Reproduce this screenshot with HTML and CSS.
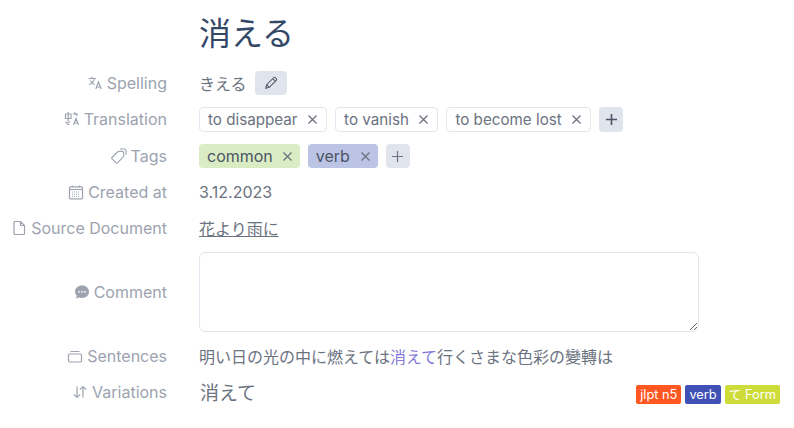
FILE: index.html
```html
<!DOCTYPE html>
<html lang="ja">
<head>
    <meta charset="UTF-8">
    <title>消える</title>
    <link rel="stylesheet" href="styles.css">
</head>
<body>
    <main class="word">
        <h1 class="word-title">消える</h1>
        <div class="fields">
            <div class="label">
                <svg class="icon" viewBox="0 0 16 16"><path d="M1.500 3.500h7.500M5 1.800v1.700M7.500 3.500c-.6 3-2.800 5.200-5.500 6.300M3.500 5.500c.8 2 2.200 3.300 4 4.200M8.800 14l2.700-7 2.700 7M9.600 12h3.800"/></svg>
                Spelling
            </div>
            <div class="value">
                <span>きえる</span>
                <button class="btn btn-edit"><svg class="icon icon-edit" viewBox="0 0 16 16"><path d="M2 14l1-4L11 2a1.500 1.500 0 0 1 2.100 0l.9.9a1.500 1.500 0 0 1 0 2.100L6 13zM10 3l3 3M3 10l3 3"/></svg></button>
            </div>

            <div class="label label-top">
                <svg class="icon" viewBox="0 0 16 16"><path d="M1.500 3h5.500v4.500H1.500zM4.200 1v9M2 10.500c.3 2 1.500 3 3.500 3.200M6 10.800c-.8 0-1.500 0-2.500.6M9 3h5M10.500 1.500l2.500 3M9.500 14l2.500-6.500 2.500 6.500M10.300 12h3.400"/></svg>
                Translation
            </div>
            <div class="value">
                <span class="tag">to disappear<svg class="close" viewBox="0 0 9 9"><path d="M.5.500l8 8M8.500.500l-8 8"/></svg></span>
                <span class="tag">to vanish<svg class="close" viewBox="0 0 9 9"><path d="M.5.500l8 8M8.500.500l-8 8"/></svg></span>
                <span class="tag">to become lost<svg class="close" viewBox="0 0 9 9"><path d="M.5.500l8 8M8.500.500l-8 8"/></svg></span>
                <button class="btn btn-add btn-tall"><svg class="plus plus-dark" viewBox="0 0 11 11"><path d="M5.500 0v11M0 5.500h11"/></svg></button>
            </div>

            <div class="label">
                <svg class="icon icon-tags" viewBox="0 0 16 16"><path d="M1 9.500L7 3.500a1 1 0 0 1 .8-.3l3.700.2a1 1 0 0 1 1 1l.2 3.700a1 1 0 0 1-.3.8l-6 6a1 1 0 0 1-1.400 0l-4-4a1 1 0 0 1 0-1.400zM9.800 5.200h.01M9 1h4.500a1.500 1.500 0 0 1 1.500 1.500V7"/></svg>
                Tags
            </div>
            <div class="value">
                <span class="tag tag-green">common<svg class="close" viewBox="0 0 9 9"><path d="M.5.500l8 8M8.500.500l-8 8"/></svg></span>
                <span class="tag tag-indigo">verb<svg class="close" viewBox="0 0 9 9"><path d="M.5.500l8 8M8.500.500l-8 8"/></svg></span>
                <button class="btn btn-add"><svg class="plus" viewBox="0 0 11 11"><path d="M5.500 0v11M0 5.500h11"/></svg></button>
            </div>

            <div class="label">
                <svg class="icon" viewBox="0 0 16 16"><path d="M2.500 2.800h11a1 1 0 0 1 1 1v10a1 1 0 0 1-1 1h-11a1 1 0 0 1-1-1v-10a1 1 0 0 1 1-1zM1.500 5.500h13M4.500 1.500v2M11.500 1.500v2"/><path class="cal-dots" d="M4 8h8M4 10.200h8M4 12.400h8"/></svg>
                Created at
            </div>
            <div class="value">3.12.2023</div>

            <div class="label">
                <svg class="icon" viewBox="0 0 16 16"><path d="M4 1.500h5.500L13.500 5.500v8a1 1 0 0 1-1 1h-8.500a1 1 0 0 1-1-1v-11a1 1 0 0 1 1-1zM9.500 1.500v4h4"/></svg>
                Source Document
            </div>
            <div class="value"><a class="doc-link" href="#">花より雨に</a></div>

            <div class="label">
                <svg class="icon icon-fill" viewBox="0 0 16 16"><path d="M8 1.500c3.900 0 7 2.700 7 6.200s-3.100 6.200-7 6.200c-1 0-1.900-.2-2.800-.5L2 14.500l.8-3C1.700 10.500 1 9.200 1 7.700 1 4.200 4.100 1.500 8 1.500z"/><circle class="dot" cx="5" cy="7.800" r=".9"/><circle class="dot" cx="8" cy="7.800" r=".9"/><circle class="dot" cx="11" cy="7.800" r=".9"/></svg>
                Comment
            </div>
            <textarea class="comment"></textarea>

            <div class="label">
                <svg class="icon" viewBox="0 0 16 16"><path d="M3 6h10a1.500 1.500 0 0 1 1.500 1.500v5a1.500 1.500 0 0 1-1.500 1.500h-10a1.500 1.500 0 0 1-1.500-1.500v-5a1.500 1.500 0 0 1 1.500-1.500zM3.500 3.500h9"/></svg>
                Sentences
            </div>
            <div class="value"><p class="sentence">明い日の光の中に燃えては<span class="hl">消えて</span>行くさまな色彩の變轉は</p></div>

            <div class="label label-top">
                <svg class="icon" viewBox="0 0 16 16"><path d="M5 2.500v11M1.800 10.300L5 13.500l3.200-3.200M11 13.500v-11M7.800 5.700L11 2.500l3.200 3.200"/></svg>
                Variations
            </div>
            <div class="value variation">
                <span class="variation-word">消えて</span>
                <span class="badges">
                    <span class="badge badge-orange">jlpt n5</span>
                    <span class="badge badge-indigo">verb</span>
                    <span class="badge badge-lime">て Form</span>
                </span>
            </div>
        </div>
    </main>
</body>
</html>
```

FILE: styles.css
```css
body {
    margin: 0;
    background: #fff;
    font-family: Inter, "Noto Sans CJK JP", sans-serif;
    font-size: 16px;
    color: #6b7280;
}

.word {
    padding: 0 14px 0 0;
}

.word-title {
    margin: 0;
    padding: 11px 0 15px 199px;
    font-size: 32px;
    font-weight: 400;
    line-height: 45px;
    color: #334766;
}

.fields {
    display: grid;
    grid-template-columns: 167px 1fr;
    column-gap: 32px;
    row-gap: 12px;
    align-items: center;
}

.label {
    display: flex;
    justify-content: flex-end;
    align-items: center;
    gap: 4px;
    height: 24px;
    color: #9ca3af;
}

.label-top {
    align-self: start;
}

.icon {
    width: 16px;
    height: 16px;
    fill: none;
    stroke: currentColor;
    stroke-width: 1.2;
}

.icon-tags {
    stroke-width: 1.1;
}

.icon-edit {
    width: 14px;
    height: 14px;
    stroke: #4b5563;
}

.icon-fill {
    fill: currentColor;
    stroke: none;
}

.dot {
    fill: #fff;
}

.cal-dots {
    stroke-width: 1;
    stroke-dasharray: 1 1;
}

.value {
    display: flex;
    align-items: center;
    gap: 8px;
    min-height: 24px;
}

.tag {
    display: inline-flex;
    align-items: center;
    gap: 10.5px;
    height: 25px;
    box-sizing: border-box;
    padding: 0 9px 0 8px;
    border-radius: 4px;
    font-size: 15.2px;
    border: 1px solid #e2e6ef;
}

.tag-green,
.tag-indigo {
    height: 24px;
    padding: 0 8px;
    border: 0;
    gap: 11px;
    font-size: 16px;
    color: #4b5563;
}

.tag-green {
    gap: 10px;
    background: #d9ecc4;
}

.tag-indigo {
    background: #bcc4e6;
}

.close {
    width: 9px;
    height: 9px;
    fill: none;
    stroke: #6b7280;
    stroke-width: 1.3;
}

.btn {
    display: inline-flex;
    align-items: center;
    justify-content: center;
    height: 24px;
    padding: 0;
    border: 0;
    border-radius: 4px;
    background: #e0e4ec;
}

.btn-edit {
    width: 32px;
}

.btn-add {
    width: 24px;
}

.btn-tall {
    height: 25px;
}

.plus {
    width: 11px;
    height: 11px;
    fill: none;
    stroke: #6b7280;
    stroke-width: 1.2;
}

.plus-dark {
    stroke: #4b5563;
    stroke-width: 1.6;
}

.doc-link {
    color: #6b7280;
    text-decoration: underline;
}

.comment {
    display: block;
    box-sizing: border-box;
    width: 500px;
    height: 80px;
    padding: 8px;
    border: 1px solid #e2e6ef;
    border-radius: 6px;
    outline: none;
}

.sentence {
    margin: 0;
}

.hl {
    color: #8478d8;
}

.variation {
    justify-content: space-between;
}

.variation-word {
    padding-left: 1px;
    font-size: 19px;
    line-height: 28px;
}

.badges {
    display: flex;
    gap: 4px;
}

.badge {
    padding: 0 4px;
    height: 19px;
    line-height: 19px;
    border-radius: 2px;
    font-size: 12.8px;
    color: #fff;
}

.badge-orange { background: #ff5722; }
.badge-indigo { background: #3f51b5; }
.badge-lime { background: #cddc39; }
```
